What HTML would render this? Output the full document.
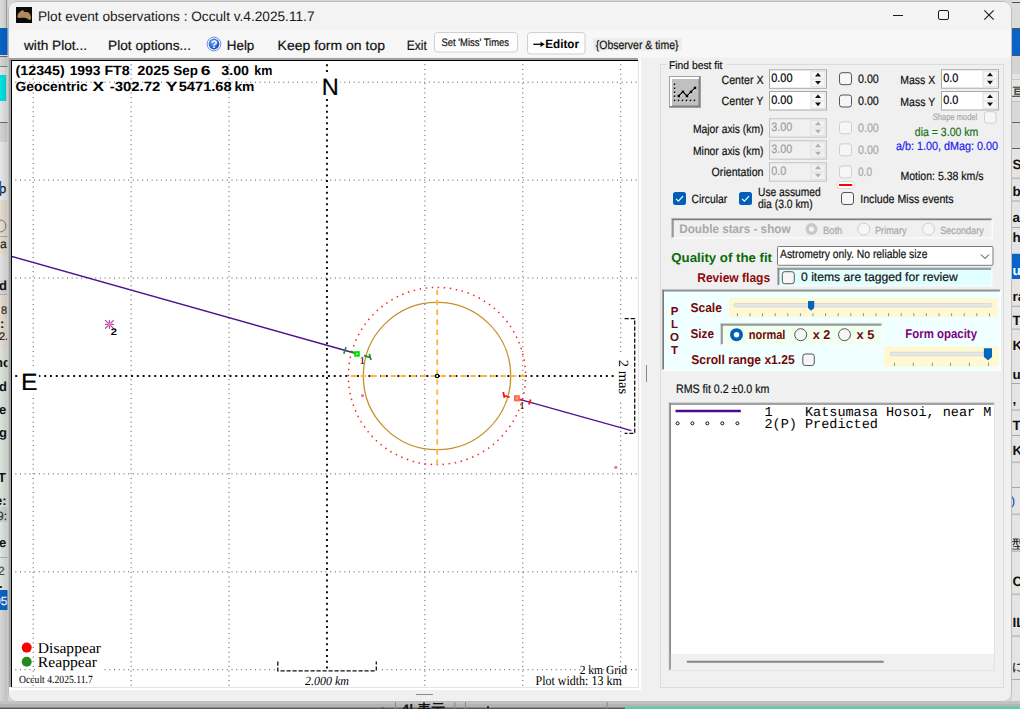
<!DOCTYPE html><html><head><meta charset="utf-8"><style>html,body{margin:0;padding:0;background:#d4d4d4;overflow:hidden}svg{display:block}</style></head><body>
<svg width="1020" height="709" viewBox="0 0 1020 709" font-family="'Liberation Sans', sans-serif" text-rendering="geometricPrecision">
<defs><clipPath id="plotclip"><rect x="12" y="61" width="626" height="626"/></clipPath><clipPath id="listclip"><rect x="670" y="404" width="324" height="250"/></clipPath><clipPath id="lclip"><rect x="0" y="0" width="7.5" height="701"/></clipPath><clipPath id="rclip"><rect x="1012" y="0" width="8" height="701"/></clipPath><clipPath id="bclip"><rect x="0" y="702" width="1020" height="7"/></clipPath><clipPath id="winclip"><rect x="8" y="1" width="1004" height="700" rx="8"/></clipPath><linearGradient id="lshadow" x1="0" x2="1" y1="0" y2="0"><stop offset="0" stop-color="#000" stop-opacity="0"/><stop offset="1" stop-color="#000" stop-opacity="0.12"/></linearGradient><radialGradient id="helpg" cx="40%" cy="35%" r="70%"><stop offset="0" stop-color="#6aa8ff"/><stop offset="1" stop-color="#1040c0"/></radialGradient></defs>
<rect x="0" y="0" width="1020" height="709" fill="#d6d6d6"/>
<g clip-path="url(#lclip)">
<rect x="0" y="0" width="8" height="28" fill="#dcdcdc"/>
<rect x="6" y="0" width="1" height="28" fill="#a8a8a8"/>
<rect x="0" y="28" width="8" height="27" fill="#0a64c8"/>
<rect x="0" y="55" width="8" height="2" fill="#ece4dc"/>
<rect x="0" y="56" width="8" height="1" fill="#6a6a6a"/>
<rect x="0" y="57" width="8" height="9" fill="#d6d6d6"/>
<rect x="0" y="66" width="8" height="1" fill="#858585"/>
<rect x="0" y="67" width="8" height="8" fill="#e2e2e2"/>
<rect x="0" y="75" width="6" height="26" fill="#00e0e0"/>
<rect x="0" y="101" width="8" height="21" fill="#e6e6e6"/>
<rect x="0" y="122" width="8" height="1" fill="#6a6a6a"/>
<rect x="0" y="123" width="8" height="19" fill="#d4d4d4"/>
<rect x="0" y="142" width="8" height="58" fill="#e8e8e8"/>
<text x="-4" y="193" font-size="13" fill="#111" stroke="#111" stroke-width="0.2">lp</text>
<rect x="0" y="181" width="1.2" height="12" fill="#2060c0"/>
<rect x="0" y="200" width="8" height="54" fill="#e6dccf"/>
<circle cx="0" cy="226" r="6" fill="none" stroke="#777" stroke-width="1"/>
<rect x="0" y="236" width="8" height="1" fill="#a8a8a8"/>
<text x="0" y="248" font-size="12" fill="#222" stroke="#222" stroke-width="0.2">a</text>
<rect x="0" y="254" width="8" height="26" fill="#e2e2e2"/>
<text x="-1" y="290" font-size="13" font-weight="bold" fill="#111">d</text>
<rect x="0" y="294" width="8" height="1" fill="#b8b8b8"/>
<rect x="0" y="295" width="8" height="52" fill="#e6dccf"/>
<text x="1" y="314" font-size="11" fill="#333" stroke="#333" stroke-width="0.2">8</text>
<text x="0" y="328" font-size="13" font-weight="bold" fill="#111">:</text>
<text x="-1" y="340" font-size="11" fill="#223" stroke="#223" stroke-width="0.2">2.</text>
<rect x="0" y="347" width="8" height="160" fill="#dbe3db"/>
<text x="-5" y="367" font-size="13" font-weight="bold" fill="#111">nc</text>
<text x="-1" y="391" font-size="13" font-weight="bold" fill="#111">d</text>
<text x="-1" y="414" font-size="13" font-weight="bold" fill="#111">e</text>
<text x="-1" y="437" font-size="13" font-weight="bold" fill="#111">g</text>
<text x="-2" y="482" font-size="13" font-weight="bold" fill="#112">T</text>
<text x="-5" y="505" font-size="13" font-weight="bold" fill="#111">e:</text>
<rect x="0" y="507" width="8" height="15" fill="#cfd3cf"/>
<text x="-3" y="520" font-size="12" fill="#333" stroke="#333" stroke-width="0.2">9:</text>
<rect x="0" y="522" width="8" height="68" fill="#dfe5df"/>
<text x="-1" y="547" font-size="13" font-weight="bold" fill="#111">e</text>
<rect x="0" y="557" width="8" height="1" fill="#b0b0b0"/>
<text x="-2" y="575" font-size="12" fill="#444" stroke="#444" stroke-width="0.2">2</text>
<text x="-1" y="588" font-size="13" font-weight="bold" fill="#111">.</text>
<rect x="0" y="590" width="8" height="20" fill="#0a64c8"/>
<text x="-6" y="605" font-size="12" fill="#fff" stroke="#fff" stroke-width="0.2">05</text>
<rect x="0" y="610" width="8" height="91" fill="#d6d6d6"/>
<rect x="0" y="0" width="8" height="709" fill="url(#lshadow)"/>
</g>
<g clip-path="url(#rclip)">
<rect x="1012" y="0" width="8" height="709" fill="#e4e4e4"/>
<rect x="1012" y="0" width="8" height="2" fill="#e0e0e0"/>
<rect x="1012" y="2" width="8" height="1" fill="#505050"/>
<rect x="1012" y="3" width="8" height="25" fill="#dcdcdc"/>
<rect x="1012" y="28" width="8" height="1" fill="#6b4a3a"/>
<rect x="1012" y="29" width="8" height="26" fill="#0a64c8"/>
<rect x="1012" y="55" width="8" height="1" fill="#505050"/>
<rect x="1012" y="56" width="8" height="18" fill="#d4d4d4"/>
<rect x="1012" y="79" width="8" height="1" fill="#c8c8c8"/>
<text x="1012" y="96" font-size="12" fill="#111" stroke="#111" stroke-width="0.2">亘</text>
<rect x="1012" y="101" width="8" height="1" fill="#c0c0c0"/>
<rect x="1012" y="102" width="8" height="20" fill="#d8d8d8"/>
<rect x="1012" y="122" width="8" height="1" fill="#606060"/>
<rect x="1012" y="123" width="8" height="25" fill="#d8d8d8"/>
<rect x="1012" y="148" width="8" height="1" fill="#606060"/>
<rect x="1012" y="177.7" width="8" height="1" fill="#a8a8a8"/>
<rect x="1012" y="200.5" width="8" height="1" fill="#a8a8a8"/>
<rect x="1012" y="227" width="8" height="1" fill="#a8a8a8"/>
<rect x="1012" y="305.8" width="8" height="1" fill="#a8a8a8"/>
<rect x="1012" y="328.6" width="8" height="1" fill="#a8a8a8"/>
<rect x="1012" y="383" width="8" height="1" fill="#a8a8a8"/>
<rect x="1012" y="409.6" width="8" height="1" fill="#a8a8a8"/>
<rect x="1012" y="435" width="8" height="1" fill="#a8a8a8"/>
<rect x="1012" y="461.7" width="8" height="1" fill="#a8a8a8"/>
<rect x="1012" y="487" width="8" height="1" fill="#a8a8a8"/>
<rect x="1012" y="513.7" width="8" height="1" fill="#a8a8a8"/>
<rect x="1012" y="550.6" width="8" height="1" fill="#a8a8a8"/>
<rect x="1012" y="593.7" width="8" height="1" fill="#a8a8a8"/>
<rect x="1012" y="635.6" width="8" height="1" fill="#a8a8a8"/>
<rect x="1012" y="679" width="8" height="1" fill="#a8a8a8"/>
<rect x="1012" y="253.8" width="8" height="25.2" fill="#0a64c8"/>
<text x="1012.5" y="168.5" font-size="13.5" font-weight="bold" fill="#111">S</text>
<text x="1012.5" y="196" font-size="13.5" font-weight="bold" fill="#111">b</text>
<text x="1012.5" y="222" font-size="13.5" font-weight="bold" fill="#111">a</text>
<text x="1012.5" y="242" font-size="13.5" font-weight="bold" fill="#111">hi</text>
<text x="1012.5" y="275" font-size="13.5" font-weight="bold" fill="#fff">u</text>
<text x="1012.5" y="300.5" font-size="13.5" font-weight="bold" fill="#111">ra</text>
<text x="1012.5" y="325" font-size="13.5" font-weight="bold" fill="#111">T</text>
<text x="1012.5" y="350" font-size="13.5" font-weight="bold" fill="#111">K</text>
<text x="1012.5" y="379" font-size="13.5" font-weight="bold" fill="#111">us</text>
<text x="1012.5" y="404" font-size="13.5" font-weight="bold" fill="#111">,</text>
<text x="1012.5" y="430" font-size="13.5" font-weight="bold" fill="#111">T</text>
<text x="1012.5" y="455" font-size="13.5" font-weight="bold" fill="#111">K</text>
<text x="1012.5" y="585.5" font-size="13.5" font-weight="bold" fill="#111">C</text>
<text x="1012.5" y="626.5" font-size="13.5" font-weight="bold" fill="#111">IL</text>
<text x="1011" y="505" font-size="12" fill="#2050c0" stroke="#2050c0" stroke-width="0.2">)</text>
<text x="1012" y="548" font-size="12" fill="#111" stroke="#111" stroke-width="0.2">型</text>
<text x="1012" y="671" font-size="12" fill="#111" stroke="#111" stroke-width="0.2">に</text>
</g>
<rect x="0" y="701" width="1020" height="8" fill="#c2c2c2"/>
<rect x="0" y="704" width="1020" height="3.5" fill="#b4b4b4"/>
<rect x="0" y="707.5" width="625" height="1.5" fill="#5a5a5a"/>
<rect x="625" y="706.5" width="395" height="2.5" fill="#62cba2"/>
<rect x="395" y="702" width="1" height="7" fill="#8a8a8a"/>
<rect x="454.3" y="702" width="1" height="7" fill="#8a8a8a"/>
<rect x="465" y="702" width="1" height="7" fill="#8a8a8a"/>
<rect x="606.7" y="702" width="1" height="7" fill="#8a8a8a"/>
<g clip-path="url(#bclip)">
<text x="401.5" y="714" font-size="14" font-weight="bold" fill="#111">4| 表示</text>
<text x="382" y="712" font-size="10" fill="#555" stroke="#555" stroke-width="0.2">▸</text>
<rect x="487" y="706" width="2" height="2" fill="#333"/>
</g>
<rect x="8" y="1" width="1004" height="701" fill="#f0f0f0" rx="8"/>
<g clip-path="url(#winclip)">
<rect x="8" y="1" width="1004" height="30" fill="#f3f3f3"/>
<rect x="8" y="31" width="1004" height="26.5" fill="#f7f7f7"/>
</g>
<rect x="8.5" y="1.5" width="1003" height="700" rx="8" fill="none" stroke="#bcbcbc"/>
<rect x="16" y="7" width="16" height="16" fill="#0c0a07"/>
<path d="M17.3,16.5 C17.5,14 19.5,12 21.5,10.8 C22.5,10 23.5,10.3 24,11.5 C25,12.5 26,11.8 27.5,12 C29.5,12.5 30.8,15 31,17.5 C31,19.5 30,20.5 29,19.8 C28,19 26.5,18 24.5,17.8 C22.5,17.5 21,18 19.5,17.9 C18.3,17.8 17.3,17.5 17.3,16.5 Z" fill="#b08a5a"/>
<text x="37.9" y="20.9" font-size="13.7" fill="#1a1a1a" textLength="276.6" lengthAdjust="spacingAndGlyphs">Plot event observations : Occult v.4.2025.11.7</text>
<line x1="893" y1="15.5" x2="903" y2="15.5" stroke="#1a1a1a" stroke-width="1"/>
<rect x="938.5" y="10.5" width="10" height="9" fill="none" stroke="#1a1a1a" stroke-width="1" rx="1.5"/>
<line x1="984.3" y1="10.3" x2="993.7" y2="19.7" stroke="#1a1a1a" stroke-width="1.1"/>
<line x1="993.7" y1="10.3" x2="984.3" y2="19.7" stroke="#1a1a1a" stroke-width="1.1"/>
<text x="24" y="49.6" font-size="13.5" fill="#111" stroke="#111" stroke-width="0.2" textLength="63" lengthAdjust="spacingAndGlyphs">with Plot...</text>
<text x="108" y="49.6" font-size="13.5" fill="#111" stroke="#111" stroke-width="0.2" textLength="83" lengthAdjust="spacingAndGlyphs">Plot options...</text>
<circle cx="214" cy="44" r="6.9" fill="#ffffff" stroke="#5a7ee0" stroke-width="0.9"/>
<circle cx="214" cy="44" r="5.4" fill="url(#helpg)"/>
<text x="214.1" y="48.3" font-size="11" font-weight="bold" fill="#fff" text-anchor="middle">?</text>
<text x="226.8" y="49.6" font-size="13.5" fill="#111" stroke="#111" stroke-width="0.2" textLength="27.5" lengthAdjust="spacingAndGlyphs">Help</text>
<text x="277.6" y="49.6" font-size="13.5" fill="#111" stroke="#111" stroke-width="0.2" textLength="107.4" lengthAdjust="spacingAndGlyphs">Keep form on top</text>
<text x="406.7" y="49.6" font-size="13.5" fill="#111" stroke="#111" stroke-width="0.2" textLength="20.1" lengthAdjust="spacingAndGlyphs">Exit</text>
<rect x="434.5" y="32.5" width="83" height="19.5" fill="#fdfdfd" stroke="#d0d0d0" stroke-width="1" rx="3"/>
<text x="441.5" y="45.8" font-size="10.8" fill="#111" stroke="#111" stroke-width="0.2" textLength="67.5" lengthAdjust="spacingAndGlyphs">Set &#x27;Miss&#x27; Times</text>
<rect x="527.5" y="32.5" width="57.5" height="21.5" fill="#fdfdfd" stroke="#d0d0d0" stroke-width="1" rx="3"/>
<line x1="533.3" y1="44.3" x2="542.5" y2="44.3" stroke="#000" stroke-width="1.3"/>
<path d="M540.5,41.8 L544.8,44.3 L540.5,46.9 Z" fill="#000"/>
<text x="545.3" y="47.8" font-size="12" font-weight="bold" textLength="33.7" lengthAdjust="spacingAndGlyphs">Editor</text>
<rect x="593" y="38.3" width="88.7" height="12.2" fill="#ebebeb"/>
<text x="595.8" y="48.8" font-size="12" fill="#111" stroke="#111" stroke-width="0.2" textLength="82.7" lengthAdjust="spacingAndGlyphs">{Observer &amp; time}</text>
<rect x="9" y="58" width="632" height="632" fill="#ffffff"/>
<rect x="9" y="58" width="629" height="2" fill="#a0a0a0"/>
<rect x="9" y="58" width="2" height="629" fill="#a0a0a0"/>
<rect x="11" y="60" width="627" height="1" fill="#000"/>
<rect x="11" y="60" width="1" height="627" fill="#000"/>
<rect x="638" y="60" width="1" height="628" fill="#e3e3e3"/>
<rect x="11" y="687" width="628" height="1" fill="#e3e3e3"/>
<g clip-path="url(#plotclip)">
<line x1="33.2" y1="61" x2="33.2" y2="687" stroke="#505050" stroke-width="1" stroke-dasharray="1 3.7" stroke-dashoffset="1.4"/>
<line x1="131.12" y1="61" x2="131.12" y2="687" stroke="#505050" stroke-width="1" stroke-dasharray="1 3.7" stroke-dashoffset="1.4"/>
<line x1="229.04" y1="61" x2="229.04" y2="687" stroke="#505050" stroke-width="1" stroke-dasharray="1 3.7" stroke-dashoffset="1.4"/>
<line x1="424.88" y1="61" x2="424.88" y2="687" stroke="#505050" stroke-width="1" stroke-dasharray="1 3.7" stroke-dashoffset="1.4"/>
<line x1="522.8" y1="61" x2="522.8" y2="687" stroke="#505050" stroke-width="1" stroke-dasharray="1 3.7" stroke-dashoffset="1.4"/>
<line x1="620.72" y1="61" x2="620.72" y2="687" stroke="#505050" stroke-width="1" stroke-dasharray="1 3.7" stroke-dashoffset="1.4"/>
<line x1="12" y1="82.2" x2="638" y2="82.2" stroke="#505050" stroke-width="1" stroke-dasharray="1 3.7" stroke-dashoffset="1.4"/>
<line x1="12" y1="180.12" x2="638" y2="180.12" stroke="#505050" stroke-width="1" stroke-dasharray="1 3.7" stroke-dashoffset="1.4"/>
<line x1="12" y1="278.04" x2="638" y2="278.04" stroke="#505050" stroke-width="1" stroke-dasharray="1 3.7" stroke-dashoffset="1.4"/>
<line x1="12" y1="473.88" x2="638" y2="473.88" stroke="#505050" stroke-width="1" stroke-dasharray="1 3.7" stroke-dashoffset="1.4"/>
<line x1="12" y1="571.8" x2="638" y2="571.8" stroke="#505050" stroke-width="1" stroke-dasharray="1 3.7" stroke-dashoffset="1.4"/>
<line x1="12" y1="669.72" x2="638" y2="669.72" stroke="#505050" stroke-width="1" stroke-dasharray="1 3.7" stroke-dashoffset="1.4"/>
<line x1="326.96" y1="61" x2="326.96" y2="687" stroke="#111" stroke-width="2" stroke-dasharray="2 3.79" stroke-dashoffset="2.48"/>
<line x1="12" y1="375.96" x2="638" y2="375.96" stroke="#111" stroke-width="2" stroke-dasharray="2 3.79" stroke-dashoffset="2.55"/>
<rect x="318" y="73" width="22" height="26" fill="#fff"/>
<rect x="18" y="368" width="21" height="26" fill="#fff"/>
<text x="321.8" y="94.9" font-size="23.5" stroke="#000" stroke-width="0.2" textLength="17.0" lengthAdjust="spacingAndGlyphs">N</text>
<text x="21" y="389.8" font-size="23.5" stroke="#000" stroke-width="0.2" textLength="16.5" lengthAdjust="spacingAndGlyphs">E</text>
<text x="15.5" y="74.5" font-size="13.3" font-weight="bold" textLength="49.3" lengthAdjust="spacingAndGlyphs">(12345)</text>
<text x="69.7" y="74.5" font-size="13.3" font-weight="bold" textLength="30.7" lengthAdjust="spacingAndGlyphs">1993</text>
<text x="104.4" y="74.5" font-size="13.3" font-weight="bold" textLength="25.4" lengthAdjust="spacingAndGlyphs">FT8</text>
<text x="137.2" y="74.5" font-size="13.3" font-weight="bold" textLength="32.1" lengthAdjust="spacingAndGlyphs">2025</text>
<text x="173.3" y="74.5" font-size="13.3" font-weight="bold" textLength="24.7" lengthAdjust="spacingAndGlyphs">Sep</text>
<text x="200.7" y="74.5" font-size="13.3" font-weight="bold" textLength="9.8" lengthAdjust="spacingAndGlyphs">6</text>
<text x="221.3" y="74.5" font-size="13.3" font-weight="bold" textLength="27.7" lengthAdjust="spacingAndGlyphs">3.00</text>
<text x="254.2" y="74.5" font-size="13.3" font-weight="bold" textLength="18.1" lengthAdjust="spacingAndGlyphs">km</text>
<text x="15.5" y="90.7" font-size="13.3" font-weight="bold" textLength="72.2" lengthAdjust="spacingAndGlyphs">Geocentric</text>
<text x="92.6" y="90.7" font-size="13.3" font-weight="bold" textLength="11.6" lengthAdjust="spacingAndGlyphs">X</text>
<text x="109.7" y="90.7" font-size="13.3" font-weight="bold" textLength="50.7" lengthAdjust="spacingAndGlyphs">-302.72</text>
<text x="165.7" y="90.7" font-size="13.3" font-weight="bold" textLength="11.8" lengthAdjust="spacingAndGlyphs">Y</text>
<text x="178.7" y="90.7" font-size="13.3" font-weight="bold" textLength="53.0" lengthAdjust="spacingAndGlyphs">5471.68</text>
<text x="234.4" y="90.7" font-size="13.3" font-weight="bold" textLength="20.0" lengthAdjust="spacingAndGlyphs">km</text>
<circle cx="437" cy="376" r="88.6" fill="none" stroke="#ff2020" stroke-width="1.5" stroke-dasharray="1.5 4.58" stroke-dashoffset="1.97"/>
<circle cx="437" cy="376" r="73.7" fill="none" stroke="#c4922c" stroke-width="1.3"/>
<line x1="437.2" y1="287.4" x2="437.2" y2="464.6" stroke="#ffb940" stroke-width="1.9" stroke-dasharray="5.4 4.58" stroke-dashoffset="7.75"/>
<line x1="348.4" y1="376" x2="525.6" y2="376" stroke="#ffb940" stroke-width="1.9" stroke-dasharray="5.4 4.58" stroke-dashoffset="7.7"/>
<circle cx="437.1" cy="376" r="1.7" fill="#fff" stroke="#000" stroke-width="1.3"/>
<circle cx="362.5" cy="395.7" r="1.6" fill="#ff69b4"/>
<circle cx="615.8" cy="467.4" r="1.6" fill="#ff69b4"/>
<line x1="105.0" y1="324.4" x2="113.8" y2="324.4" stroke="#a03ca0" stroke-width="1.1"/>
<line x1="109.4" y1="320.0" x2="109.4" y2="328.8" stroke="#a03ca0" stroke-width="1.1"/>
<line x1="105.1" y1="320.1" x2="113.7" y2="328.7" stroke="#a03ca0" stroke-width="1.1"/>
<line x1="105.1" y1="328.7" x2="113.7" y2="320.1" stroke="#a03ca0" stroke-width="1.1"/>
<circle cx="109.4" cy="324.4" r="1.8" fill="#ff66cc"/>
<text x="110.8" y="334.8" font-size="9.5" font-weight="bold" textLength="6.2" lengthAdjust="spacingAndGlyphs">2</text>
<line x1="11" y1="256.3" x2="357" y2="353.8" stroke="#52128f" stroke-width="1.5"/>
<line x1="343.8" y1="353.8" x2="346" y2="347.2" stroke="#2a8a2a" stroke-width="1.7"/>
<line x1="351" y1="351.6" x2="357" y2="353.6" stroke="#2a8a2a" stroke-width="1.7"/>
<line x1="364" y1="355.6" x2="370" y2="357.4" stroke="#2a8a2a" stroke-width="1.7"/>
<line x1="369.3" y1="353.8" x2="371" y2="360" stroke="#2a8a2a" stroke-width="1.7"/>
<rect x="354.2" y="351.1" width="5.6" height="5.6" fill="#00e000"/>
<rect x="356" y="352.9" width="2" height="2" fill="#70f070"/>
<text x="359.5" y="363.8" font-size="10.5" font-family="'Liberation Serif', serif" textLength="5.5" lengthAdjust="spacingAndGlyphs">1</text>
<line x1="517" y1="398.6" x2="631.4" y2="430.6" stroke="#52128f" stroke-width="1.5"/>
<line x1="503.2" y1="392" x2="504.5" y2="397.8" stroke="#ff1010" stroke-width="1.8"/>
<line x1="503.5" y1="395.5" x2="509.5" y2="397.2" stroke="#ff1010" stroke-width="1.8"/>
<line x1="517" y1="398.5" x2="523" y2="400.5" stroke="#ff1010" stroke-width="1.8"/>
<line x1="529" y1="404.6" x2="530.6" y2="399.4" stroke="#ff1010" stroke-width="1.8"/>
<rect x="514" y="395.2" width="5.8" height="6.2" fill="#ff6a4a"/>
<rect x="516" y="397.3" width="2" height="2" fill="#ffb0a0"/>
<text x="519.5" y="408.8" font-size="10.5" font-family="'Liberation Serif', serif" textLength="5.0" lengthAdjust="spacingAndGlyphs">1</text>
<rect x="615" y="353" width="23" height="48" fill="#fff"/>
<path d="M624.6,318.6 H634.7 V433.3 H624.6" fill="none" stroke="#111" stroke-width="1.3" stroke-dasharray="4.2 1.8"/>
<text transform="translate(619.2,359.8) rotate(90)" font-family="'Liberation Serif', serif" font-size="14" textLength="34.5" lengthAdjust="spacingAndGlyphs">2 mas</text>
<rect x="35" y="638" width="66" height="33" fill="#fff"/>
<circle cx="26.7" cy="647.6" r="5" fill="#ff0000"/>
<circle cx="26.7" cy="661.8" r="5" fill="#228b22"/>
<text x="37.8" y="652.9" font-size="15" font-family="'Liberation Serif', serif" textLength="63.2" lengthAdjust="spacingAndGlyphs">Disappear</text>
<text x="37.8" y="666.8" font-size="15" font-family="'Liberation Serif', serif" textLength="59.2" lengthAdjust="spacingAndGlyphs">Reappear</text>
<rect x="277" y="669" width="101" height="18" fill="#fff"/>
<path d="M277.8,661.5 V670.8 H376.3 V661.5" fill="none" stroke="#111" stroke-width="1.3" stroke-dasharray="4.2 1.8"/>
<text x="305" y="684.8" font-size="12.5" font-family="'Liberation Serif', serif" font-style="italic" textLength="44" lengthAdjust="spacingAndGlyphs">2.000 km</text>
<text x="579.7" y="673.5" font-size="12.5" font-family="'Liberation Serif', serif" textLength="47.3" lengthAdjust="spacingAndGlyphs">2 km Grid</text>
<text x="535.5" y="684.7" font-size="13.5" font-family="'Liberation Serif', serif" textLength="86.2" lengthAdjust="spacingAndGlyphs">Plot width: 13 km</text>
<text x="19" y="682.6" font-size="11" font-family="'Liberation Serif', serif" textLength="73.8" lengthAdjust="spacingAndGlyphs">Occult 4.2025.11.7</text>
</g>
<line x1="646.5" y1="365" x2="646.5" y2="382" stroke="#8a8a8a" stroke-width="1"/>
<line x1="416" y1="694.5" x2="433" y2="694.5" stroke="#8a8a8a" stroke-width="1"/>
<rect x="660.5" y="64.5" width="343" height="623" fill="none" stroke="#dcdcdc"/>
<rect x="666" y="58" width="60" height="12" fill="#f0f0f0"/>
<text x="669" y="68.8" font-size="11.2" fill="#111" stroke="#111" stroke-width="0.2" textLength="53.3" lengthAdjust="spacingAndGlyphs">Find best fit</text>
<rect x="669" y="76" width="32" height="32" fill="#a0a0a0"/>
<rect x="670" y="77" width="30" height="30" fill="#808080"/>
<rect x="670" y="77" width="29" height="2" fill="#ffffff"/>
<rect x="670" y="77" width="2" height="29" fill="#ffffff"/>
<rect x="672" y="79" width="26.5" height="26.5" fill="#c0c0c0"/>
<rect x="674.3" y="84.1" width="1.7" height="1.7" fill="#ffffff"/>
<rect x="674.3" y="88.1" width="1.7" height="1.7" fill="#ffffff"/>
<rect x="674.3" y="92.0" width="1.7" height="1.7" fill="#ffffff"/>
<rect x="674.3" y="96.0" width="1.7" height="1.7" fill="#ffffff"/>
<rect x="674.3" y="100.2" width="1.7" height="1.7" fill="#ffffff"/>
<rect x="678.3" y="100.2" width="1.7" height="1.7" fill="#ffffff"/>
<rect x="682.3" y="100.2" width="1.7" height="1.7" fill="#ffffff"/>
<rect x="686.3" y="100.2" width="1.7" height="1.7" fill="#ffffff"/>
<rect x="690.3" y="100.2" width="1.7" height="1.7" fill="#ffffff"/>
<rect x="694.3" y="100.2" width="1.7" height="1.7" fill="#ffffff"/>
<rect x="673.8" y="83.6" width="1.6" height="1.6" fill="#000000"/>
<rect x="673.8" y="87.6" width="1.6" height="1.6" fill="#000000"/>
<rect x="673.8" y="91.5" width="1.6" height="1.6" fill="#000000"/>
<rect x="673.8" y="95.5" width="1.6" height="1.6" fill="#000000"/>
<rect x="673.8" y="99.7" width="1.6" height="1.6" fill="#000000"/>
<rect x="677.8" y="99.7" width="1.6" height="1.6" fill="#000000"/>
<rect x="681.8" y="99.7" width="1.6" height="1.6" fill="#000000"/>
<rect x="685.8" y="99.7" width="1.6" height="1.6" fill="#000000"/>
<rect x="689.8" y="99.7" width="1.6" height="1.6" fill="#000000"/>
<rect x="693.8" y="99.7" width="1.6" height="1.6" fill="#000000"/>
<path d="M679.5,96.7 L683.6,92.5 L687.7,96.7 L691.7,92.60000000000001 L695.7,88.60000000000001" fill="none" stroke="#ffffff" stroke-width="1"/>
<path d="M678.8,96 L682.9,91.8 L687,96 L691,91.9 L695,87.9" fill="none" stroke="#000" stroke-width="1.1"/>
<rect x="677.6" y="94.8" width="2.4" height="2.4" fill="#000"/>
<rect x="681.7" y="90.6" width="2.4" height="2.4" fill="#000"/>
<rect x="685.8" y="94.8" width="2.4" height="2.4" fill="#000"/>
<rect x="689.8" y="90.7" width="2.4" height="2.4" fill="#000"/>
<rect x="693.8" y="86.7" width="2.4" height="2.4" fill="#000"/>
<text x="721.5" y="83.6" font-size="12" fill="#111" stroke="#111" stroke-width="0.2" textLength="42.0" lengthAdjust="spacingAndGlyphs">Center X</text>
<text x="721.5" y="105.3" font-size="12" fill="#111" stroke="#111" stroke-width="0.2" textLength="42.0" lengthAdjust="spacingAndGlyphs">Center Y</text>
<rect x="769.5" y="69.8" width="57" height="18.5" fill="#ffffff" stroke="#a8a8a8" stroke-width="1"/>
<rect x="811" y="71.3" width="14" height="15.5" fill="#f6f6f6" stroke="#e0e0e0" stroke-width="1"/>
<line x1="811" y1="79.05" x2="825" y2="79.05" stroke="#e0e0e0" stroke-width="1"/>
<path d="M815,76.39999999999999 L818,72.69999999999999 L821,76.39999999999999 Z" fill="#111"/>
<path d="M815,80.89999999999999 L818,84.6 L821,80.89999999999999 Z" fill="#111"/>
<text x="771.2" y="81.8" font-size="12.3" stroke="#000" stroke-width="0.2" textLength="21.3" lengthAdjust="spacingAndGlyphs">0.00</text>
<rect x="769.5" y="91.5" width="57" height="18.5" fill="#ffffff" stroke="#a8a8a8" stroke-width="1"/>
<rect x="811" y="93.0" width="14" height="15.5" fill="#f6f6f6" stroke="#e0e0e0" stroke-width="1"/>
<line x1="811" y1="100.75" x2="825" y2="100.75" stroke="#e0e0e0" stroke-width="1"/>
<path d="M815,98.1 L818,94.39999999999999 L821,98.1 Z" fill="#111"/>
<path d="M815,102.6 L818,106.3 L821,102.6 Z" fill="#111"/>
<text x="771.2" y="103.5" font-size="12.3" stroke="#000" stroke-width="0.2" textLength="21.3" lengthAdjust="spacingAndGlyphs">0.00</text>
<rect x="941.5" y="69.7" width="57" height="18.5" fill="#ffffff" stroke="#a8a8a8" stroke-width="1"/>
<rect x="983" y="71.2" width="14" height="15.5" fill="#f6f6f6" stroke="#e0e0e0" stroke-width="1"/>
<line x1="983" y1="78.95" x2="997" y2="78.95" stroke="#e0e0e0" stroke-width="1"/>
<path d="M987,76.3 L990,72.6 L993,76.3 Z" fill="#111"/>
<path d="M987,80.8 L990,84.5 L993,80.8 Z" fill="#111"/>
<text x="943.2" y="81.7" font-size="12.3" stroke="#000" stroke-width="0.2" textLength="15.1" lengthAdjust="spacingAndGlyphs">0.0</text>
<rect x="941.5" y="91.5" width="57" height="18.5" fill="#ffffff" stroke="#a8a8a8" stroke-width="1"/>
<rect x="983" y="93.0" width="14" height="15.5" fill="#f6f6f6" stroke="#e0e0e0" stroke-width="1"/>
<line x1="983" y1="100.75" x2="997" y2="100.75" stroke="#e0e0e0" stroke-width="1"/>
<path d="M987,98.1 L990,94.39999999999999 L993,98.1 Z" fill="#111"/>
<path d="M987,102.6 L990,106.3 L993,102.6 Z" fill="#111"/>
<text x="943.2" y="103.5" font-size="12.3" stroke="#000" stroke-width="0.2" textLength="15.1" lengthAdjust="spacingAndGlyphs">0.0</text>
<rect x="769.5" y="118.7" width="57" height="18.5" fill="#f0f0f0" stroke="#c4c4c4" stroke-width="1"/>
<rect x="811" y="120.2" width="14" height="15.5" fill="#f0f0f0" stroke="#e0e0e0" stroke-width="1"/>
<line x1="811" y1="127.95" x2="825" y2="127.95" stroke="#e0e0e0" stroke-width="1"/>
<path d="M815,125.3 L818,121.6 L821,125.3 Z" fill="#b0b0b0"/>
<path d="M815,129.8 L818,133.5 L821,129.8 Z" fill="#b0b0b0"/>
<text x="771.2" y="130.7" font-size="12.3" fill="#a0a0a0" stroke="#a0a0a0" stroke-width="0.2" textLength="21.0" lengthAdjust="spacingAndGlyphs">3.00</text>
<rect x="769.5" y="140.7" width="57" height="18.5" fill="#f0f0f0" stroke="#c4c4c4" stroke-width="1"/>
<rect x="811" y="142.2" width="14" height="15.5" fill="#f0f0f0" stroke="#e0e0e0" stroke-width="1"/>
<line x1="811" y1="149.95" x2="825" y2="149.95" stroke="#e0e0e0" stroke-width="1"/>
<path d="M815,147.29999999999998 L818,143.6 L821,147.29999999999998 Z" fill="#b0b0b0"/>
<path d="M815,151.79999999999998 L818,155.49999999999997 L821,151.79999999999998 Z" fill="#b0b0b0"/>
<text x="771.2" y="152.7" font-size="12.3" fill="#a0a0a0" stroke="#a0a0a0" stroke-width="0.2" textLength="21.0" lengthAdjust="spacingAndGlyphs">3.00</text>
<rect x="769.5" y="162.7" width="57" height="18.5" fill="#f0f0f0" stroke="#c4c4c4" stroke-width="1"/>
<rect x="811" y="164.2" width="14" height="15.5" fill="#f0f0f0" stroke="#e0e0e0" stroke-width="1"/>
<line x1="811" y1="171.95" x2="825" y2="171.95" stroke="#e0e0e0" stroke-width="1"/>
<path d="M815,169.29999999999998 L818,165.6 L821,169.29999999999998 Z" fill="#b0b0b0"/>
<path d="M815,173.79999999999998 L818,177.49999999999997 L821,173.79999999999998 Z" fill="#b0b0b0"/>
<text x="771.2" y="174.7" font-size="12.3" fill="#a0a0a0" stroke="#a0a0a0" stroke-width="0.2" textLength="15.2" lengthAdjust="spacingAndGlyphs">0.0</text>
<rect x="839.5" y="72.7" width="12" height="12" fill="#f6f6f6" stroke="#555555" stroke-width="1" rx="2.5"/>
<rect x="839.5" y="95.0" width="12" height="12" fill="#f6f6f6" stroke="#555555" stroke-width="1" rx="2.5"/>
<text x="858" y="83" font-size="12.3" fill="#111" stroke="#111" stroke-width="0.2" textLength="20.8" lengthAdjust="spacingAndGlyphs">0.00</text>
<text x="858" y="105.3" font-size="12.3" fill="#111" stroke="#111" stroke-width="0.2" textLength="20.8" lengthAdjust="spacingAndGlyphs">0.00</text>
<text x="900.3" y="83.8" font-size="12" fill="#111" stroke="#111" stroke-width="0.2" textLength="34.9" lengthAdjust="spacingAndGlyphs">Mass X</text>
<text x="900.3" y="105.5" font-size="12" fill="#111" stroke="#111" stroke-width="0.2" textLength="34.9" lengthAdjust="spacingAndGlyphs">Mass Y</text>
<text x="932.8" y="119.8" font-size="9.3" fill="#a8a8a8" stroke="#a8a8a8" stroke-width="0.2" textLength="44.4" lengthAdjust="spacingAndGlyphs">Shape model</text>
<rect x="984.5" y="111.7" width="11.5" height="11.5" fill="#f6f6f6" stroke="#cfcfcf" stroke-width="1" rx="2.5"/>
<text x="693" y="133" font-size="12" fill="#111" stroke="#111" stroke-width="0.2" textLength="70.5" lengthAdjust="spacingAndGlyphs">Major axis (km)</text>
<text x="693" y="155" font-size="12" fill="#111" stroke="#111" stroke-width="0.2" textLength="70.5" lengthAdjust="spacingAndGlyphs">Minor axis (km)</text>
<text x="711.6" y="175.6" font-size="12" fill="#111" stroke="#111" stroke-width="0.2" textLength="51.9" lengthAdjust="spacingAndGlyphs">Orientation</text>
<rect x="839.5" y="121.8" width="12" height="12" fill="#f6f6f6" stroke="#cfcfcf" stroke-width="1" rx="2.5"/>
<rect x="839.5" y="143.8" width="12" height="12" fill="#f6f6f6" stroke="#cfcfcf" stroke-width="1" rx="2.5"/>
<rect x="839.5" y="165.9" width="12" height="12" fill="#f6f6f6" stroke="#cfcfcf" stroke-width="1" rx="2.5"/>
<text x="858" y="131.5" font-size="12.3" fill="#a8a8a8" stroke="#a8a8a8" stroke-width="0.2" textLength="20.8" lengthAdjust="spacingAndGlyphs">0.00</text>
<text x="858" y="153.6" font-size="12.3" fill="#a8a8a8" stroke="#a8a8a8" stroke-width="0.2" textLength="20.8" lengthAdjust="spacingAndGlyphs">0.00</text>
<text x="858" y="175.6" font-size="12.3" fill="#a8a8a8" stroke="#a8a8a8" stroke-width="0.2" textLength="14" lengthAdjust="spacingAndGlyphs">0.0</text>
<text x="914.8" y="136" font-size="12" fill="#187018" stroke="#187018" stroke-width="0.2" textLength="63.5" lengthAdjust="spacingAndGlyphs">dia = 3.00 km</text>
<text x="896" y="149.7" font-size="12" fill="#2020f0" stroke="#2020f0" stroke-width="0.2" textLength="102" lengthAdjust="spacingAndGlyphs">a/b: 1.00, dMag: 0.00</text>
<text x="900.4" y="179.7" font-size="12" fill="#111" stroke="#111" stroke-width="0.2" textLength="83.2" lengthAdjust="spacingAndGlyphs">Motion: 5.38 km/s</text>
<rect x="836.7" y="181.5" width="18" height="7" fill="#fdfdfd" stroke="#d8d8d8" stroke-width="1" rx="3.5"/>
<line x1="839" y1="185" x2="852.2" y2="185" stroke="#ff0000" stroke-width="2"/>
<rect x="673" y="192" width="13" height="13" fill="#005fb8" rx="2.5"/>
<path d="M676,198.8 L678.4,201.2 L683,196.2" fill="none" stroke="#fff" stroke-width="1.2"/>
<text x="691.6" y="202.6" font-size="12" fill="#111" stroke="#111" stroke-width="0.2" textLength="35.6" lengthAdjust="spacingAndGlyphs">Circular</text>
<rect x="739" y="192" width="13" height="13" fill="#005fb8" rx="2.5"/>
<path d="M742,198.8 L744.4,201.2 L749,196.2" fill="none" stroke="#fff" stroke-width="1.2"/>
<text x="758" y="196" font-size="12" fill="#111" stroke="#111" stroke-width="0.2" textLength="62.7" lengthAdjust="spacingAndGlyphs">Use assumed</text>
<text x="758" y="207.6" font-size="12" fill="#111" stroke="#111" stroke-width="0.2" textLength="54.7" lengthAdjust="spacingAndGlyphs">dia (3.0 km)</text>
<rect x="841.5" y="192.5" width="12" height="12" fill="#f6f6f6" stroke="#555555" stroke-width="1" rx="2.5"/>
<text x="860.2" y="202.6" font-size="12" fill="#111" stroke="#111" stroke-width="0.2" textLength="93.4" lengthAdjust="spacingAndGlyphs">Include Miss events</text>
<rect x="671.5" y="218.2" width="321.2" height="20.3" fill="#f0f0f0"/>
<rect x="671.5" y="218.2" width="321.2" height="1" fill="#a0a0a0"/>
<rect x="671.5" y="218.2" width="1" height="20.3" fill="#a0a0a0"/>
<rect x="672.5" y="219.2" width="319.2" height="1" fill="#696969"/>
<rect x="672.5" y="219.2" width="1" height="18.3" fill="#696969"/>
<rect x="671.5" y="237.5" width="321.2" height="1" fill="#ffffff"/>
<rect x="991.7" y="218.2" width="1" height="20.3" fill="#ffffff"/>
<text x="679.2" y="232.7" font-size="12.5" font-weight="bold" fill="#a8a8a8" textLength="111.4" lengthAdjust="spacingAndGlyphs">Double stars - show</text>
<circle cx="811.5" cy="229.1" r="6.0" fill="#c8c8c8"/>
<circle cx="811.5" cy="229.1" r="2.6" fill="#f4f4f4"/>
<text x="823" y="233.6" font-size="10.5" fill="#a8a8a8" stroke="#a8a8a8" stroke-width="0.2" textLength="19.3" lengthAdjust="spacingAndGlyphs">Both</text>
<circle cx="863.7" cy="229.1" r="6.0" fill="#f6f6f6" stroke="#cfcfcf" stroke-width="1"/>
<text x="875" y="233.6" font-size="10.5" fill="#a8a8a8" stroke="#a8a8a8" stroke-width="0.2" textLength="31.5" lengthAdjust="spacingAndGlyphs">Primary</text>
<circle cx="928.5" cy="229.1" r="6.0" fill="#f6f6f6" stroke="#cfcfcf" stroke-width="1"/>
<text x="940.2" y="233.6" font-size="10.5" fill="#a8a8a8" stroke="#a8a8a8" stroke-width="0.2" textLength="43.6" lengthAdjust="spacingAndGlyphs">Secondary</text>
<text x="671.3" y="261.5" font-size="12.8" font-weight="bold" fill="#0a6a0a" textLength="100.7" lengthAdjust="spacingAndGlyphs">Quality of the fit</text>
<rect x="777.5" y="246.5" width="215.5" height="18.8" fill="#ffffff" stroke="#7a7a7a" stroke-width="1" rx="1"/>
<text x="780" y="258.2" font-size="12" fill="#111" stroke="#111" stroke-width="0.2" textLength="147.5" lengthAdjust="spacingAndGlyphs">Astrometry only. No reliable size</text>
<path d="M981,254.5 L985,258.5 L989,254.5" fill="none" stroke="#333" stroke-width="1"/>
<text x="697.2" y="281.8" font-size="12.8" font-weight="bold" fill="#8a0a0a" textLength="73.0" lengthAdjust="spacingAndGlyphs">Review flags</text>
<rect x="777.3" y="267.6" width="215" height="18.6" fill="#e0ffff"/>
<rect x="777.3" y="267.6" width="215" height="1" fill="#a0a0a0"/>
<rect x="777.3" y="267.6" width="1" height="18.6" fill="#a0a0a0"/>
<rect x="778.3" y="268.6" width="213" height="1" fill="#696969"/>
<rect x="778.3" y="268.6" width="1" height="16.6" fill="#696969"/>
<rect x="777.3" y="285.20000000000005" width="215" height="1" fill="#ffffff"/>
<rect x="991.3" y="267.6" width="1" height="18.6" fill="#ffffff"/>
<rect x="782.3" y="271.7" width="12" height="12" fill="#f6f6f6" stroke="#555555" stroke-width="1" rx="2.5"/>
<text x="801" y="281.2" font-size="12.3" fill="#111" stroke="#111" stroke-width="0.2" textLength="156.8" lengthAdjust="spacingAndGlyphs">0 items are tagged for review</text>
<rect x="661.9" y="289.4" width="339" height="81.2" fill="#f0ffff"/>
<rect x="661.9" y="289.4" width="339" height="1" fill="#a0a0a0"/>
<rect x="661.9" y="289.4" width="1" height="81.2" fill="#a0a0a0"/>
<rect x="662.9" y="290.4" width="337" height="1" fill="#696969"/>
<rect x="662.9" y="290.4" width="1" height="79.2" fill="#696969"/>
<rect x="661.9" y="369.59999999999997" width="339" height="1" fill="#ffffff"/>
<rect x="999.9" y="289.4" width="1" height="81.2" fill="#ffffff"/>
<text x="674.6" y="315" font-size="11.5" font-weight="bold" fill="#720808" text-anchor="middle">P</text>
<text x="674.6" y="328.2" font-size="11.5" font-weight="bold" fill="#720808" text-anchor="middle">L</text>
<text x="674.6" y="341" font-size="11.5" font-weight="bold" fill="#720808" text-anchor="middle">O</text>
<text x="674.6" y="354.3" font-size="11.5" font-weight="bold" fill="#720808" text-anchor="middle">T</text>
<text x="690.4" y="311.8" font-size="12.8" font-weight="bold" fill="#720808" textLength="31.5" lengthAdjust="spacingAndGlyphs">Scale</text>
<rect x="729" y="298.2" width="268.6" height="18.6" fill="#fff8d2"/>
<rect x="733.9" y="303.5" width="258.1" height="3.5" fill="#e6e6e6" stroke="#d4d4d4" stroke-width="0.8" rx="1.5"/>
<path d="M808,301 H814.2 V308 L811.1,310.8 L808,308 Z" fill="#0067c0"/>
<line x1="737.4" y1="313.2" x2="737.4" y2="316.2" stroke="#909090" stroke-width="1"/>
<line x1="750.0" y1="313.2" x2="750.0" y2="316.2" stroke="#909090" stroke-width="1"/>
<line x1="762.6" y1="313.2" x2="762.6" y2="316.2" stroke="#909090" stroke-width="1"/>
<line x1="775.2" y1="313.2" x2="775.2" y2="316.2" stroke="#909090" stroke-width="1"/>
<line x1="787.8" y1="313.2" x2="787.8" y2="316.2" stroke="#909090" stroke-width="1"/>
<line x1="800.4" y1="313.2" x2="800.4" y2="316.2" stroke="#909090" stroke-width="1"/>
<line x1="813.0" y1="313.2" x2="813.0" y2="316.2" stroke="#909090" stroke-width="1"/>
<line x1="825.6" y1="313.2" x2="825.6" y2="316.2" stroke="#909090" stroke-width="1"/>
<line x1="838.2" y1="313.2" x2="838.2" y2="316.2" stroke="#909090" stroke-width="1"/>
<line x1="850.8" y1="313.2" x2="850.8" y2="316.2" stroke="#909090" stroke-width="1"/>
<line x1="863.4" y1="313.2" x2="863.4" y2="316.2" stroke="#909090" stroke-width="1"/>
<line x1="876.0" y1="313.2" x2="876.0" y2="316.2" stroke="#909090" stroke-width="1"/>
<line x1="888.6" y1="313.2" x2="888.6" y2="316.2" stroke="#909090" stroke-width="1"/>
<line x1="901.2" y1="313.2" x2="901.2" y2="316.2" stroke="#909090" stroke-width="1"/>
<line x1="913.8" y1="313.2" x2="913.8" y2="316.2" stroke="#909090" stroke-width="1"/>
<line x1="926.4" y1="313.2" x2="926.4" y2="316.2" stroke="#909090" stroke-width="1"/>
<line x1="939.0" y1="313.2" x2="939.0" y2="316.2" stroke="#909090" stroke-width="1"/>
<line x1="951.6" y1="313.2" x2="951.6" y2="316.2" stroke="#909090" stroke-width="1"/>
<line x1="964.2" y1="313.2" x2="964.2" y2="316.2" stroke="#909090" stroke-width="1"/>
<line x1="976.8" y1="313.2" x2="976.8" y2="316.2" stroke="#909090" stroke-width="1"/>
<line x1="989.4" y1="313.2" x2="989.4" y2="316.2" stroke="#909090" stroke-width="1"/>
<text x="690.4" y="337.6" font-size="12.8" font-weight="bold" fill="#720808" textLength="23.6" lengthAdjust="spacingAndGlyphs">Size</text>
<rect x="720.6" y="323.5" width="162" height="21.8" fill="#f0fff0"/>
<rect x="720.6" y="323.5" width="162" height="1" fill="#a0a0a0"/>
<rect x="720.6" y="323.5" width="1" height="21.8" fill="#a0a0a0"/>
<rect x="721.6" y="324.5" width="160" height="1" fill="#696969"/>
<rect x="721.6" y="324.5" width="1" height="19.8" fill="#696969"/>
<rect x="720.6" y="344.3" width="162" height="1" fill="#ffffff"/>
<rect x="881.6" y="323.5" width="1" height="21.8" fill="#ffffff"/>
<circle cx="736.5" cy="334.7" r="6.5" fill="#005fb8"/>
<circle cx="736.5" cy="334.7" r="2.73" fill="#fff"/>
<text x="748.7" y="338.5" font-size="12.8" font-weight="bold" fill="#720808" textLength="36.7" lengthAdjust="spacingAndGlyphs">normal</text>
<circle cx="800.7" cy="334.7" r="6.0" fill="#f6f6f6" stroke="#555" stroke-width="1"/>
<text x="812.8" y="338.5" font-size="12.8" font-weight="bold" fill="#720808" textLength="17.6" lengthAdjust="spacingAndGlyphs">x 2</text>
<circle cx="844.5" cy="334.7" r="6.0" fill="#f6f6f6" stroke="#555" stroke-width="1"/>
<text x="856.6" y="338.5" font-size="12.8" font-weight="bold" fill="#720808" textLength="17.9" lengthAdjust="spacingAndGlyphs">x 5</text>
<text x="905.3" y="338" font-size="12.8" font-weight="bold" fill="#800080" textLength="71.7" lengthAdjust="spacingAndGlyphs">Form opacity</text>
<text x="691.3" y="363.5" font-size="12.8" font-weight="bold" fill="#720808" textLength="103.3" lengthAdjust="spacingAndGlyphs">Scroll range x1.25</text>
<rect x="802.8" y="354.0" width="11.5" height="11.5" fill="#f6f6f6" stroke="#555555" stroke-width="1" rx="2.5"/>
<rect x="883.8" y="346.4" width="115.2" height="20.1" fill="#fff8d2"/>
<rect x="890" y="352.2" width="102" height="3.5" fill="#e6e6e6" stroke="#d4d4d4" stroke-width="0.8" rx="1.5"/>
<path d="M983.9,348.2 H992 V357 L988,360.3 L983.9,357 Z" fill="#0067c0"/>
<line x1="894.4" y1="362.6" x2="894.4" y2="366" stroke="#909090" stroke-width="1"/>
<line x1="913.3" y1="362.6" x2="913.3" y2="366" stroke="#909090" stroke-width="1"/>
<line x1="932.3" y1="362.6" x2="932.3" y2="366" stroke="#909090" stroke-width="1"/>
<line x1="950.5" y1="362.6" x2="950.5" y2="366" stroke="#909090" stroke-width="1"/>
<line x1="969.4" y1="362.6" x2="969.4" y2="366" stroke="#909090" stroke-width="1"/>
<line x1="988.5" y1="362.6" x2="988.5" y2="366" stroke="#909090" stroke-width="1"/>
<text x="676" y="393" font-size="12.3" fill="#111" stroke="#111" stroke-width="0.2" textLength="93.4" lengthAdjust="spacingAndGlyphs">RMS fit 0.2 ±0.0 km</text>
<rect x="668.8" y="402.6" width="326" height="268" fill="#ffffff"/>
<rect x="668.8" y="402.6" width="326" height="1" fill="#a0a0a0"/>
<rect x="668.8" y="402.6" width="1" height="268" fill="#a0a0a0"/>
<rect x="669.8" y="403.6" width="324" height="1" fill="#696969"/>
<rect x="669.8" y="403.6" width="1" height="266" fill="#696969"/>
<rect x="994" y="402.6" width="1" height="268" fill="#e3e3e3"/>
<rect x="668.8" y="670" width="326" height="1" fill="#e3e3e3"/>
<rect x="670.8" y="654" width="323.2" height="16" fill="#f0f0f0"/>
<line x1="686.8" y1="661.8" x2="883.7" y2="661.8" stroke="#858585" stroke-width="2"/>
<g clip-path="url(#listclip)">
<line x1="675.5" y1="411" x2="740.8" y2="411" stroke="#4b0a8a" stroke-width="2.6"/>
<circle cx="677.6" cy="423.3" r="1.5" fill="none" stroke="#111" stroke-width="1"/>
<circle cx="692.4" cy="423.3" r="1.5" fill="none" stroke="#111" stroke-width="1"/>
<circle cx="707.3" cy="423.3" r="1.5" fill="none" stroke="#111" stroke-width="1"/>
<circle cx="722.3" cy="423.3" r="1.5" fill="none" stroke="#111" stroke-width="1"/>
<circle cx="737.4" cy="423.3" r="1.5" fill="none" stroke="#111" stroke-width="1"/>
<text x="764.5" y="415.9" font-size="13.5" font-family="'Liberation Mono', monospace">1</text>
<text x="805" y="415.9" font-size="13.5" font-family="'Liberation Mono', monospace">Katsumasa Hosoi, near M</text>
<text x="764.5" y="428.2" font-size="13.5" font-family="'Liberation Mono', monospace">2(P)</text>
<text x="805" y="428.2" font-size="13.5" font-family="'Liberation Mono', monospace">Predicted</text>
</g>
</svg></body></html>
